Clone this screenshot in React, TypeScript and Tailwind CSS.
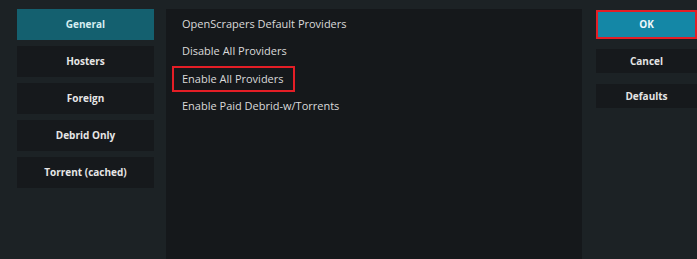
const categories = ["General", "Hosters", "Foreign", "Debrid Only", "Torrent (cached)"];

const providers = [
  "OpenScrapers Default Providers",
  "Disable All Providers",
  "Enable All Providers",
  "Enable Paid Debrid-w/Torrents",
];

export default function App() {
  const selected = 2;

  return (
    <div
      className="flex h-[259px] w-[697px] overflow-hidden bg-[#1c2225] text-[#e4e4e4]"
      style={{ fontFamily: '"Open Sans", "Noto Sans", sans-serif' }}
    >
      {/* categories */}
      <div className="ml-[17px] mt-[9px] flex w-[137px] flex-col gap-[6px]">
        {categories.map((c, i) => (
          <div
            key={c}
            className={`flex h-[31px] items-center justify-center text-[10px] font-bold ${
              i === 0 ? "bg-[#14606f] text-[#d6eef2]" : "bg-[#16191c] text-[#e6e6e6]"
            }`}
          >
            {c}
          </div>
        ))}
      </div>

      {/* list */}
      <div className="ml-[12px] mt-[9px] flex w-[416px] flex-col bg-[#15181b] pl-[6px] pt-[1px]">
        {providers.map((p, i) => (
          <div key={p} className="flex h-[27.5px] items-center">
            <div
              className={`flex h-[26px] items-center border-2 pl-[8px] pr-[9px] text-[11px] text-[#dadada] ${
                i === selected ? "border-[#e41e26]" : "border-transparent"
              }`}
            >
              {p}
            </div>
          </div>
        ))}
      </div>

      {/* actions */}
      <div className="ml-[14px] mt-[10px] flex w-[101px] flex-col">
        <div className="flex h-[29px] items-center justify-center border-2 border-[#e41e26] bg-[#1487a6] text-[10px] font-bold text-[#eef8fb]">
          OK
        </div>
        <div className="mt-[10px] flex h-[24px] items-center justify-center bg-[#16191c] text-[10px] font-bold">
          Cancel
        </div>
        <div className="mt-[11px] flex h-[24px] items-center justify-center bg-[#16191c] text-[10px] font-bold">
          Defaults
        </div>
      </div>
    </div>
  );
}
